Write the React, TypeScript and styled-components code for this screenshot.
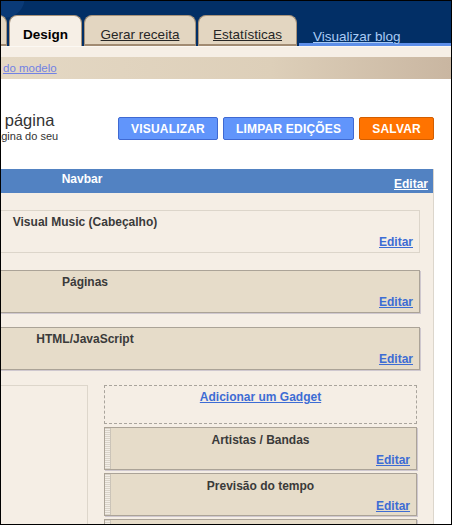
import React from 'react'
import styled, { createGlobalStyle } from 'styled-components'

const GlobalStyle = createGlobalStyle`
    html, body {
        margin: 0;
        padding: 0;
        background: #fff;
    }
    body {
        font-family: "Liberation Sans", Arial, sans-serif;
    }
`

const Frame = styled.div`
    box-sizing: border-box;
    width: 452px;
    height: 525px;
    border: 1px solid #000;
    overflow: hidden;
    display: flex;
    flex-direction: column;
    background: #fff;
`

const Header = styled.header`
    height: 45px;
    flex-shrink: 0;
    display: flex;
    align-items: flex-end;
    background:
        radial-gradient(circle at 4px -3px, #0a3a77 0 19px, transparent 20px),
        #022f66;
`

const Tab = styled.div<{ $active?: boolean; $width: number }>`
    box-sizing: border-box;
    width: ${p => p.$width}px;
    height: 31px;
    flex-shrink: 0;
    margin-right: 2px;
    padding-top: 11px;
    text-align: center;
    border: 1px solid #a8937a;
    border-bottom: none;
    border-radius: 8px 8px 0 0;
    background: ${p => (p.$active ? '#f6efe6' : '#e3d6c1')};
    box-shadow: ${p => (p.$active ? 'none' : 'inset 0 -2px 0 #a18b72')};
    font-size: 13.5px;
    line-height: 16px;
    white-space: nowrap;
    color: ${p => (p.$active ? '#000' : '#262626')};
    font-weight: ${p => (p.$active ? 700 : 400)};
    text-decoration: ${p => (p.$active ? 'none' : 'underline')};
    &:first-child {
        margin-left: -60px;
    }
`

const ViewBlog = styled.div`
    flex: 1;
    box-sizing: border-box;
    height: 30px;
    padding: 11px 0 0 14px;
    border-bottom: 3px solid #5d8ee8;
    a {
        font-size: 13.5px;
        line-height: 16px;
        color: #a9cbf5;
        text-decoration: underline;
    }
`

const CreamStrip = styled.div`
    height: 10px;
    flex-shrink: 0;
    border-top: 1px solid #fbf8f3;
    background: #f6efe6;
`

const LinkBar = styled.div`
    height: 22px;
    flex-shrink: 0;
    padding-left: 2px;
    background: linear-gradient(90deg, #e4d8c4 0%, #ddcfb9 60%, #c9b6a1 100%);
    font-size: 11.5px;
    line-height: 22px;
    a {
        color: #7182e4;
        text-decoration: underline;
    }
`

const TopRow = styled.div`
    box-sizing: border-box;
    height: 90px;
    flex-shrink: 0;
    display: flex;
    justify-content: space-between;
    align-items: flex-start;
    padding: 32px 17px 0 0;
`

const PageTitle = styled.div`
    overflow: hidden;
    h1 {
        margin: 0 0 0 -10px;
        font-size: 16.5px;
        font-weight: 400;
        line-height: 19px;
        color: #333;
        white-space: nowrap;
    }
    p {
        margin: 0 0 0 -12px;
        font-size: 11px;
        line-height: 13px;
        color: #333;
        white-space: nowrap;
    }
`

const Buttons = styled.div`
    display: flex;
    gap: 5px;
    margin-top: 6px;
`

const Button = styled.button<{ $tone: 'blue' | 'orange' }>`
    box-sizing: border-box;
    height: 23px;
    padding: 0 12px;
    border: 1px solid ${p => (p.$tone === 'orange' ? '#d35e00' : '#3f69d2')};
    border-radius: 2px;
    background: ${p => (p.$tone === 'orange' ? '#ff7300' : '#6195fb')};
    color: #fff;
    font-family: "Liberation Sans", Arial, sans-serif;
    font-size: 12px;
    font-weight: 700;
    letter-spacing: 0.2px;
    white-space: nowrap;
`

const Panel = styled.div`
    flex: 1;
    box-sizing: border-box;
    width: 698px;
    margin-left: -265px;
    border-right: 1px solid #dcd6cc;
    background: #f5eee5;
`

const NavbarBar = styled.div`
    box-sizing: border-box;
    height: 24px;
    display: grid;
    padding-right: 5px;
    background: #5282c2;
    color: #fff;
    font-size: 12px;
    font-weight: 700;
    line-height: 14px;
    & > span {
        grid-area: 1 / 1;
        justify-self: center;
        align-self: start;
        margin-top: 3px;
    }
    & > a {
        grid-area: 1 / 1;
        justify-self: end;
        align-self: end;
        margin-bottom: 2px;
        color: #fff;
        text-decoration: underline;
    }
`

const Layout = styled.div`
    display: flex;
    flex-direction: column;
    padding: 17px 13px 0 14px;
`

const Widget = styled.div<{ $plain?: boolean; $space: number }>`
    box-sizing: border-box;
    height: 43px;
    display: grid;
    grid-template-columns: 1fr;
    grid-template-rows: 1fr auto;
    padding: 4px 6px 3px;
    margin-bottom: ${p => p.$space}px;
    background: ${p => (p.$plain ? '#f5eee5' : '#e6dcc9')};
    border: 1px solid ${p => (p.$plain ? '#dcd5ca' : '#aba397')};
    box-shadow: ${p => (p.$plain ? 'none' : '1px 1px 0 #cfc8cf')};
`

const Title = styled.span`
    grid-row: 1;
    grid-column: 1 / -1;
    justify-self: center;
    align-self: start;
    font-size: 12px;
    font-weight: 700;
    line-height: 14px;
    color: #3a3a3a;
    white-space: nowrap;
`

const EditLink = styled.a`
    grid-row: 2;
    grid-column: -2 / -1;
    justify-self: end;
    font-size: 12px;
    font-weight: 700;
    line-height: 14px;
    color: #3d6cd4;
    text-decoration: underline;
`

const Columns = styled.div`
    display: flex;
    gap: 16px;
`

const MainColumn = styled.div`
    flex: 1;
    height: 200px;
    border-top: 1px solid #ddd6cb;
    border-right: 1px solid #ddd6cb;
`

const Sidebar = styled.div`
    width: 313px;
    flex-shrink: 0;
    margin-right: 3px;
    display: flex;
    flex-direction: column;
    gap: 3px;
`

const AddGadget = styled.div`
    box-sizing: border-box;
    height: 39px;
    padding-top: 1px;
    text-align: center;
    border: 1px dashed #a9a49c;
    a {
        font-size: 12px;
        font-weight: 700;
        line-height: 14px;
        color: #3d6cd4;
        text-decoration: underline;
    }
`

const SideWidget = styled.div`
    box-sizing: border-box;
    height: 43px;
    flex-shrink: 0;
    display: grid;
    grid-template-columns: 6px 1fr;
    grid-template-rows: 1fr auto;
    background: #e6dcc9;
    border: 1px solid #aba397;
    box-shadow: 1px 1px 0 #cfc8cf;
    ${Title} {
        margin-top: 5px;
    }
    ${EditLink} {
        margin: 0 6px 2px 0;
    }
`

const Handle = styled.div`
    grid-row: 1 / -1;
    grid-column: 1;
    border-right: 1px solid #cbc4b8;
    background: repeating-linear-gradient(0deg, #d9d3c9 0 1px, #f3eee7 1px 2px);
`

// the last gadget only peeks in at the bottom edge, so it carries no text
const sideGadgets = ['Artistas / Bandas', 'Previsão do tempo', '']

const App = () => {
    return (
        <Frame>
            <GlobalStyle />
            <Header>
                <Tab $width={66} />
                <Tab $width={73} $active>Design</Tab>
                <Tab $width={112}>Gerar receita</Tab>
                <Tab $width={99}>Estatísticas</Tab>
                <ViewBlog>
                    <a>Visualizar blog</a>
                </ViewBlog>
            </Header>
            <CreamStrip />
            <LinkBar>
                <a>do modelo</a>
            </LinkBar>
            <TopRow>
                <PageTitle>
                    <h1>a página</h1>
                    <p>página do seu</p>
                </PageTitle>
                <Buttons>
                    <Button $tone='blue'>VISUALIZAR</Button>
                    <Button $tone='blue'>LIMPAR EDIÇÕES</Button>
                    <Button $tone='orange'>SALVAR</Button>
                </Buttons>
            </TopRow>
            <Panel>
                <NavbarBar>
                    <span>Navbar</span>
                    <a>Editar</a>
                </NavbarBar>
                <Layout>
                    <Widget $plain $space={17}>
                        <Title>Visual Music (Cabeçalho)</Title>
                        <EditLink>Editar</EditLink>
                    </Widget>
                    <Widget $space={14}>
                        <Title>Páginas</Title>
                        <EditLink>Editar</EditLink>
                    </Widget>
                    <Widget $space={15}>
                        <Title>HTML/JavaScript</Title>
                        <EditLink>Editar</EditLink>
                    </Widget>
                    <Columns>
                        <MainColumn />
                        <Sidebar>
                            <AddGadget>
                                <a>Adicionar um Gadget</a>
                            </AddGadget>
                            {sideGadgets.map((name, i) => (
                                <SideWidget key={i}>
                                    <Handle />
                                    {name && <Title>{name}</Title>}
                                    {name && <EditLink>Editar</EditLink>}
                                </SideWidget>
                            ))}
                        </Sidebar>
                    </Columns>
                </Layout>
            </Panel>
        </Frame>
    )
}

export default App
